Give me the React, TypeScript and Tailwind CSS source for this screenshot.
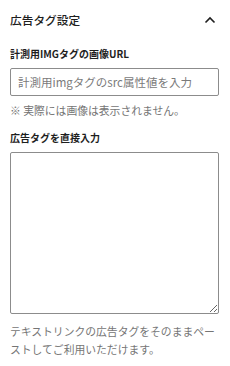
import React from "react";

export default function App() {
  const font = { fontFamily: '"Noto Sans CJK JP", "Noto Sans", sans-serif' };
  return (
    <div className="w-[230px] h-[366px] bg-white overflow-hidden" style={font}>
      <div className="flex flex-col px-[10px] pt-[12px]">
        <div className="flex items-center justify-between h-[16px]">
          <span className="text-[11.7px] leading-[16px] font-medium text-[#1e1e1e]">広告タグ設定</span>
          <svg width="12" height="8" viewBox="0 0 12 8" className="mr-[4px]">
            <path d="M1.5 6.5 L6 2 L10.5 6.5" fill="none" stroke="#1e1e1e" strokeWidth="1.6" />
          </svg>
        </div>
        <label className="mt-[19px] text-[10px] leading-[14px] font-semibold text-[#1e1e1e]">
          計測用IMGタグの画像URL
        </label>
        <input
          className="mt-[7px] h-[28px] w-[209px] border border-[#8c8c8c] rounded-[2px] px-[7px] text-[11.5px] placeholder:text-[#7a7a7a] outline-none"
          placeholder="計測用imgタグのsrc属性値を入力"
          style={font}
        />
        <p className="mt-[6px] text-[10.8px] leading-[16px] text-[#757575]">※ 実際には画像は表示されません。</p>
        <label className="mt-[13px] text-[10px] leading-[14px] font-semibold text-[#1e1e1e]">
          広告タグを直接入力
        </label>
        <textarea
          className="mt-[7px] h-[162px] w-[209px] border border-[#8c8c8c] rounded-[2px] outline-none resize-y"
          style={font}
        />
        <p className="mt-[8px] text-[10.8px] leading-[18px] text-[#757575]">
          テキストリンクの広告タグをそのままペーストしてご利用いただけます。
        </p>
      </div>
    </div>
  );
}
